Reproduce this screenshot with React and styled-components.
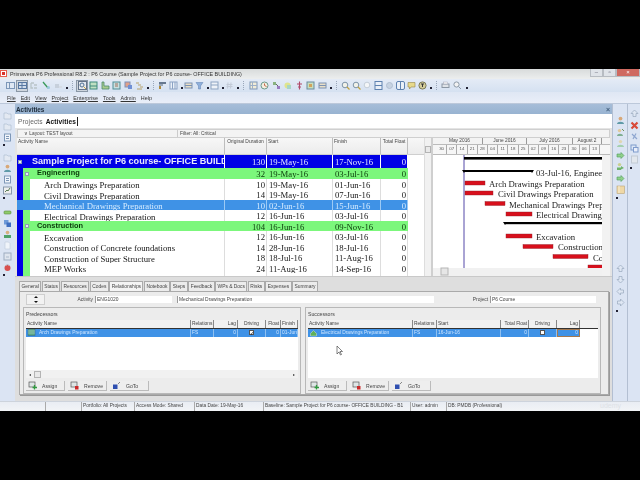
import React from 'react';
import styled, { createGlobalStyle } from 'styled-components';

const Global = createGlobalStyle`
  html, body { margin: 0; padding: 0; background: #000; }
  * { box-sizing: border-box; }
  body { font-family: "Liberation Sans", Arial, sans-serif; }
`;

const Page = styled.div`
  width: 640px; height: 480px; background: #000; padding-top: 69px; overflow: hidden; position: relative;
`;
const Win = styled.div`
  width: 640px; height: 342px; display: flex; flex-direction: column; background: #d9e3f2;
  filter: blur(0.3px); overflow: hidden;
`;
const TitleBar = styled.div`
  height: 10px; flex: none; display: flex; align-items: center; position: relative;
  background: linear-gradient(#d8dbdb, #eceeee); font-size: 5.4px; color: #333; padding-left: 10px; white-space: nowrap;
`;
const AppLogo = styled.span`
  position: absolute; left: 0; top: 1px; width: 7px; height: 7px; background: #d9332a; border: 1.5px solid #e8604f;
  box-shadow: inset 0 0 0 1px #fff;
`;
const WinBtns = styled.div`
  position: absolute; right: 0; top: 0; height: 8px; display: flex;
`;
const WinBtn = styled.span`
  width: ${p => p.$w}px; height: 8px; background: ${p => p.$bg}; border: 1px solid #b7bcc2; border-top: none;
  color: ${p => p.$fg}; font-size: 6px; line-height: 6px; text-align: center;
`;
const ToolRow = styled.div`
  height: 13px; flex: none; display: flex; align-items: center; padding-left: 5px;
  background: linear-gradient(#e4ebf6, #d5e1f1);
`;
const Tool = styled.span`
  display: flex; width: ${p => p.$w}px; height: 10px; margin-right: ${p => p.$mr}px; align-items: center; justify-content: center; flex: none;
  ${p => p.$on && 'background:#cfd6de; outline:1px solid #8a97a6;'}
`;
const Dot = styled.span`
  width: 2px; height: 2px; background: #223; margin: 5px 1px 0 1px; flex: none;
`;
const Sep = styled.span`
  width: 1px; height: 9px; border-left: 1px dotted #9aa7ba; margin: 0 4px 0 3px; flex: none;
`;
const MenuBar = styled.div`
  height: 12px; flex: none; display: flex; align-items: center; gap: 5px; padding-left: 7px;
  background: linear-gradient(#dfe7f4, #e9eef8); font-size: 5.4px; color: #333; border-bottom: 1px solid #bcc8da;
`;
const MenuKey = styled.span` text-decoration: underline; `;
const Body = styled.div` flex: 1; min-height: 0; display: flex; `;
const Dock = styled.div`
  flex: none; width: ${p => p.$w}px; display: flex; flex-direction: column; align-items: center; gap: ${p => p.$gap}px;
  padding-top: ${p => p.$top}px; background: #dbe4f3; border-left: ${p => p.$line ? '1px solid #b3bfd2' : 'none'};
`;
const DockDot = styled.span` width: 2px; height: 2px; background: #223; margin-right: 7px; flex: none; `;
const DockSpacer = styled.span` height: ${p => p.$h}px; flex: none; `;
const Main = styled.div` flex: none; width: 597px; display: flex; flex-direction: column; height: 297px; `;
const ViewTitle = styled.div`
  height: 10px; flex: none; background: linear-gradient(#a6bdd8, #98b3d1); display: flex; align-items: center; justify-content: space-between;
  padding: 0 2px 0 1px; font-size: 6.4px; font-weight: bold; color: #1d2b3a;
`;
const CloseX = styled.span` color: #44607e; font-size: 7px; font-weight: bold; `;
const ViewTabs = styled.div`
  height: 14px; flex: none; background: #fff; display: flex; align-items: center; padding-left: 3px; gap: 3px; font-size: 6.6px;
  color: #666; letter-spacing: 0.1px;
`;
const ViewTab = styled.span`
  font-weight: ${p => p.$on ? 'bold' : 'normal'}; color: ${p => p.$on ? '#111' : '#666'};
  ${p => p.$on && 'border-right:1px solid #222; padding-right:1px; line-height:9px;'}
`;
const Upper = styled.div`
  height: 148px; flex: none; background: #e4e4e4; padding: 1px 2px 0 2px; display: flex; flex-direction: column; overflow: hidden;
`;
const LayoutBar = styled.div`
  height: 9px; flex: none; display: flex; background: #f3f3f3; border: 1px solid #cfcfcf; font-size: 4.8px; color: #444; align-items: center;
`;
const LayoutCell = styled.span` width: ${p => p.$w}px; padding-left: ${p => p.$pl}px; flex: none; height: 100%; display: flex; align-items: center; border-right: ${p => p.$line ? '1px solid #ccc' : 'none'}; `;
const Split = styled.div` flex: 1; min-height: 0; display: flex; background: #fff; `;
const TablePane = styled.div` flex: none; width: 414px; display: flex; flex-direction: column; position: relative; overflow: hidden; `;
const Grid = `display:grid; grid-template-columns: 208px 42px 66px 48px 27px 17px;`;
const HeadRow = styled.div`
  ${Grid} height: 17px; flex: none; background: linear-gradient(#f7f7f7, #ececec); border-bottom: 1px solid #cfcfcf;
`;
const HeadCell = styled.div`
  font-size: 4.9px; color: #444; padding: 1px 1px; border-right: 1px solid #bdbdbd; text-align: ${p => p.$c ? 'center' : 'left'}; white-space: nowrap; overflow: hidden;
`;
const Row = styled.div`
  ${Grid} height: ${p => p.$h}px; flex: none; background: ${p => p.$bg}; color: ${p => p.$fg};
  font-family: "Liberation Serif", "Times New Roman", serif; font-size: 8.7px;
`;
const NameCell = styled.div`
  display: flex; height: 100%; align-items: center; position: relative; overflow: hidden; white-space: nowrap;
  border-right: 1px solid ${p => p.$line};
`;
const BlueGutter = styled.span` width: 6px; height: 100%; flex: none; background: ${p => p.$bg}; `;
const GreenGutter = styled.span` width: 7px; height: 100%; flex: none; background: ${p => p.$bg}; `;
const Expander = styled.span`
  position: absolute; left: ${p => p.$x}px; top: 50%; margin-top: -2px; width: 4px; height: 4px; background: #e8eef8; border: 1px solid #8c9cb5;
`;
const NameText = styled.span`
  padding-left: ${p => p.$pl}px; font-family: ${p => p.$bold ? '"Liberation Sans", Arial, sans-serif' : 'inherit'};
  font-weight: ${p => p.$bold ? 'bold' : 'normal'}; font-size: ${p => p.$size}px; position: relative; top: ${p => p.$bold ? -1 : 1}px;
`;
const ValCell = styled.div`
  height: 100%; display: flex; align-items: center; padding: 1px 1px 0 ${p => p.$r ? 1 : 2}px; justify-content: ${p => p.$r ? 'flex-end' : 'flex-start'};
  border-right: 1px solid ${p => p.$line}; white-space: nowrap;
`;
const Blank = styled.div` height: 100%; background: #fff; `;
const VScroll = styled.div`
  position: absolute; right: 0; top: 0; bottom: 0; width: 7px; background: #f1f1f1; border-left: 1px solid #ddd;
`;
const Thumb = styled.span`
  position: absolute; left: ${p => p.$l}px; top: ${p => p.$t}px; width: ${p => p.$w}px; height: ${p => p.$h}px; background: #e9e9e9; border: 1px solid #b4b4b4;
`;
const Divider = styled.div` width: 2px; flex: none; background: #cfcfcf; `;
const GanttPane = styled.div` flex: 1; min-width: 0; display: flex; flex-direction: column; position: relative; `;
const Months = styled.div` height: 7px; flex: none; display: flex; background: #f3f3f3; border-bottom: 1px solid #bbb; padding-left: 4px; `;
const Month = styled.span`
  width: ${p => p.$w}px; flex: none; font-size: 4.8px; line-height: 6px; text-align: center; color: #444; border-right: 1px solid #999; overflow: hidden; white-space: nowrap;
`;
const Weeks = styled.div` height: 10px; flex: none; display: flex; background: #f6f6f6; border-bottom: 1px solid #bbb; padding-left: 4px; `;
const Week = styled.span`
  width: 10.2px; flex: none; font-size: 4.4px; line-height: 8px; text-align: center; color: #555; border-right: 1px solid #aaa;
`;
const GanttSvg = styled.svg` display: block; flex: 1; min-height: 0; `;
const Lower = styled.div`
  flex: 1; min-height: 0; background: #dedede; padding: 4px 2px 0 4px; border-top: 1px solid #c9c9c9;
`;
const TabStrip = styled.div` height: 10px; display: flex; align-items: flex-end; `;
const DetailTab = styled.span`
  height: 10px; font-size: 4.9px; line-height: 9px; color: #444; padding: 0 1.4px; background: ${p => p.$on ? '#f4f4f4' : '#ececec'};
  border: 1px solid #aaa; border-bottom: none; margin-right: 0.6px; white-space: nowrap; flex: none;
`;
const DetailBody = styled.div`
  height: 104px; width: 590px; background: #ececec; border: 1px solid #aaa; padding: 2px 4px 0 3px; display: flex; flex-direction: column;
  box-shadow: 1px 1px 0 #999;
`;
const FieldRow = styled.div` height: 11px; flex: none; display: flex; align-items: center; font-size: 4.9px; color: #444; `;
const Spinner = styled.span`
  width: 19px; height: 11px; margin-left: 3px; flex: none; background: #f2f2f2; border: 1px solid #cfcfcf; position: relative;
  &::before { content: ""; position: absolute; left: 7px; top: 1px; border: 2px solid transparent; border-bottom: 2px solid #111; border-top: none; }
  &::after { content: ""; position: absolute; left: 7px; bottom: 1px; border: 2px solid transparent; border-top: 2px solid #111; border-bottom: none; }
`;
const FieldLabel = styled.span` width: ${p => p.$w}px; flex: none; text-align: right; padding-right: 2px; `;
const Field = styled.span`
  width: ${p => p.$w}px; height: 7px; flex: none; background: #fff; margin-right: ${p => p.$mr || 0}px; padding-left: 1px; line-height: 7px; border-left: 1px solid #999; overflow: hidden; white-space: nowrap;
`;
const Panels = styled.div` display: flex; gap: 4px; margin-top: 2px; flex: 1; min-height: 0; `;
const Panel = styled.div`
  width: ${p => p.$w}px; height: 87px; flex: none; border: 1px solid #b8b8b8; padding: 2px 2px 0 2px; display: flex; flex-direction: column; background: #ececec;
`;
const PanelTitle = styled.div` height: 10px; flex: none; font-size: 5.2px; color: #444; line-height: 8px; `;
const Table = styled.div` height: 58px; flex: none; background: #fff; display: flex; flex-direction: column; position: relative; `;
const THead = styled.div` height: 8.5px; flex: none; display: flex; background: #f1f1f1; border-bottom: 1px solid #333; `;
const TH = styled.span`
  width: ${p => p.$w}px; flex: none; font-size: 4.9px; line-height: 8px; color: #444; text-align: ${p => p.$a || 'left'}; padding: 0 1px; border-right: 1px solid #888; white-space: nowrap; overflow: hidden;
`;
const TRow = styled.div` height: 8.5px; flex: none; display: flex; background: #3f92e6; width: fit-content; `;
const TD = styled.span`
  width: ${p => p.$w}px; flex: none; font-size: 4.9px; line-height: 8px; color: #cfe6ff; padding: 0 1px; border-right: 1px solid #8fc0f0; white-space: nowrap; overflow: hidden;
  display: flex; align-items: center; justify-content: ${p => p.$a === 'center' ? 'center' : p.$a === 'right' ? 'flex-end' : 'flex-start'}; gap: 3px;
  ${p => p.$edit && 'outline:1px solid #a5794f; outline-offset:-1px;'}
`;
const Check = styled.span`
  width: 5px; height: 5px; background: #fff; border: 1px solid #555; font-size: 5px; line-height: 4px; color: #111; text-align: center; flex: none; display: block;
`;
const HBar = styled.div`
  position: absolute; left: 0; right: 0; bottom: 0; height: 8px; background: #f1f1f1; font-size: 4px; color: #333; display: flex; justify-content: space-between; padding: 2px 3px;
`;
const Buttons = styled.div` display: flex; margin-top: 3px; height: 10px; flex: none; `;
const Btn = styled.span`
  width: 39px; height: 10px; flex: none; display: flex; align-items: center; font-size: 5.1px; color: #444; background: #eee; border-right: 1px solid #bbb; border-bottom: 1px solid #bbb; margin-right: 3px; padding-left: 2px; gap: 5px;
`;
const Status = styled.div`
  height: 10px; flex: none; display: flex; align-items: center; background: linear-gradient(#e9edf3, #f2f4f7); font-size: 4.8px; color: #444; border-top: 1px solid #cdd3dc;
`;
const StatusCell = styled.span`
  width: ${p => p.$w}px; flex: none; height: 100%; line-height: 8px; padding-left: 1px; border-left: ${p => p.$line ? '1px solid #aaa' : 'none'}; white-space: nowrap; overflow: hidden;
`;
const Cursor = styled.svg` position: absolute; left: 336px; top: 346px; `;
const Watermark = styled.span`
  position: absolute; left: 600px; top: 402px; font-size: 7px; line-height: 8px; color: #dde1e6;
`;

const S = { width: 9, height: 9, viewBox: '0 0 9 9' };
const Glyph = ({ k }) => {
  const parts = {
    panes: <><rect x=".5" y="1.5" width="8" height="6" fill="#dfe8f4" stroke="#7d97b8" /><path d="M3.5 1.5v6" stroke="#7d97b8" /></>,
    panes2: <><rect x=".5" y="1.5" width="8" height="6" fill="#d0dcec" stroke="#5878a2" /><path d="M.5 4.5h8M4 1.5v6" stroke="#5878a2" /></>,
    net: <path d="M1 2h3M1 2v5h2M4 4h3M4 7h3" stroke="#b9c4c8" strokeWidth="1.3" fill="none" />,
    wand: <><path d="M1 1l5 6" stroke="#3a9a5a" strokeWidth="1.3" /><circle cx="6.5" cy="6.5" r="1.5" fill="#9cc9de" /></>,
    faint: <><rect x="1" y="3" width="4" height="4" fill="#c7d0dc" /><rect x="5" y="5" width="3" height="2" fill="#d6dde6" /></>,
    glass: <><rect x=".5" y=".5" width="8" height="8" fill="#e3e8ee" stroke="#64748a" /><circle cx="4" cy="4" r="2" fill="none" stroke="#4c6f95" /><path d="M5.5 5.5L8 8" stroke="#caa23e" /></>,
    bgreen: <><rect x="1" y="1" width="7" height="7" fill="#bfe0c2" stroke="#3f8a7c" /><path d="M1 5h7" stroke="#3f8a7c" /></>,
    bolive: <><path d="M1 1h2v4h5v3H1z" fill="#a8ca8e" stroke="#4b8a6d" strokeWidth=".8" /></>,
    bteal: <><rect x="1" y="1" width="7" height="7" fill="#c9dfe0" stroke="#4e8d96" /><path d="M3 3h3M3 5h3" stroke="#a0705c" /></>,
    bred: <><rect x="1" y="1" width="5" height="5" fill="#e0a08a" stroke="#7f90b8" /><rect x="4" y="4" width="4" height="4" fill="#6f8fd4" /></>,
    stairs: <path d="M1 2h3M3 4h3M5 6h3M2 8h5" stroke="#b7a26a" strokeWidth="1.1" fill="none" />,
    flag: <><rect x="1" y="1" width="7" height="2" fill="#66788f" /><rect x="1" y="3" width="4" height="2" fill="#98a7b9" /><rect x="1" y="5" width="2" height="3" fill="#b08a3a" /></>,
    cols: <><rect x="1" y="1" width="7" height="7" fill="#eaf0f8" stroke="#8ba2c4" /><path d="M3.5 1v7M6 1v7" stroke="#8ba2c4" /></>,
    tbl: <><rect x="1" y="2" width="7" height="5" fill="#e9dfc8" stroke="#7c92b2" /><path d="M1 4.5h7" stroke="#7c92b2" /></>,
    funnel: <path d="M1 1.5h7L5.5 5v3h-2V5z" fill="#8fb0dc" stroke="#5c7fb0" strokeWidth=".5" />,
    rows: <><rect x="1" y="1" width="7" height="7" fill="#eef2f8" stroke="#8da4c2" /><path d="M1 4h7" stroke="#8da4c2" /></>,
    hash: <path d="M3 1.5L2.5 7.5M6 1.5L5.5 7.5M1.5 3.5h6M1.5 5.5h6" stroke="#c3cbd8" />,
    cal: <><rect x="1" y="1" width="7" height="7" fill="#f1ecd8" stroke="#7f97b8" /><path d="M3.5 1v7M1 4.5h7" stroke="#9eb0c8" /></>,
    clock: <><circle cx="4.5" cy="4.5" r="3.5" fill="#f5efe0" stroke="#6d9a8a" /><path d="M4.5 2.5v2l2 1" stroke="#c2674d" fill="none" /></>,
    tree: <><rect x="1" y="1" width="3" height="3" fill="#88b27e" /><rect x="5" y="5" width="3" height="3" fill="#9a7ac0" /><path d="M4 3l2 2" stroke="#666" /></>,
    sun: <><circle cx="4.5" cy="4.5" r="3" fill="#dfe48e" /><rect x="4" y="4" width="4" height="4" fill="#a8d6c6" /></>,
    fork: <path d="M4.5 .5v8M2 3h5M3 6h3" stroke="#b04a6a" strokeWidth="1.1" />,
    pic: <><rect x="1" y="1" width="7" height="7" fill="#c7dfbf" stroke="#6a8ba0" /><rect x="3" y="3" width="3" height="3" fill="#d2a25a" /></>,
    zoomin: <><circle cx="4" cy="4" r="2.8" fill="#f1f1e8" stroke="#7d93a8" /><path d="M6 6l2.5 2.5" stroke="#c4a33c" strokeWidth="1.2" /></>,
    zoomf: <><circle cx="4" cy="4" r="2.8" fill="#f4f6f8" stroke="#c5ced9" /></>,
    hsplit: <><rect x="1" y=".5" width="7" height="8" fill="#eaf0f8" stroke="#5f82b0" /><path d="M1 4.5h7" stroke="#5f82b0" /></>,
    star: <circle cx="4.5" cy="4.5" r="3" fill="#c7d3e2" stroke="#b1bfd1" />,
    vsplit: <><rect x=".5" y=".5" width="8" height="8" rx="1.5" fill="#eaf0f8" stroke="#5f82b0" /><path d="M4.5 .5v8" stroke="#5f82b0" /></>,
    note: <path d="M1 1.5h7v4.5H4L2.5 8V6H1z" fill="#e7d98a" stroke="#95854a" strokeWidth=".6" />,
    badge: <><circle cx="4.5" cy="4.5" r="3.6" fill="#d3cd9a" stroke="#7b7a58" /><path d="M3 3h3M4.5 3v3" stroke="#333" /></>,
    print: <><rect x="1" y="3" width="7" height="3.5" fill="#dfe3e8" stroke="#8b96a3" /><rect x="2.5" y="1" width="4" height="2" fill="#f4f4f4" stroke="#aab" strokeWidth=".5" /></>,
    prev: <><circle cx="3.5" cy="3.5" r="2.6" fill="#f2f2f2" stroke="#8d9aa8" /><path d="M5.5 5.5l2.5 2.5" stroke="#8d9aa8" /></>,
    folder: <path d="M1 2h3l1 1h3v5H1z" fill="#e3e9f2" stroke="#a9b9cf" strokeWidth=".6" />,
    person: <><circle cx="4.5" cy="2.6" r="1.9" fill="#d8a878" /><path d="M1 8c0-3 7-3 7 0z" fill="#5f9aa8" /></>,
    sheet: <><rect x="1.5" y="1" width="6" height="7" fill="#f0f4fa" stroke="#7e97b7" /><path d="M3 3.5h3M3 5.5h3" stroke="#7e97b7" /></>,
    chart: <><rect x=".5" y="1" width="8" height="7" fill="#eee" stroke="#8898ac" /><path d="M2 6l2-2 1 1 2-3" stroke="#5a7c55" fill="none" /></>,
    pill: <rect x="1" y="3" width="7" height="3" rx="1" fill="#8ecb6a" stroke="#5b8a3c" strokeWidth=".6" />,
    stack: <><rect x="1" y="1" width="4.5" height="4.5" fill="#6e9ad8" /><rect x="3.5" y="3.5" width="4.5" height="4.5" fill="#3f6fc0" /></>,
    persong: <><circle cx="4.5" cy="2.6" r="1.8" fill="#d8b080" /><rect x="1" y="5" width="7" height="3" fill="#4fa36a" /></>,
    docf: <path d="M2 1h3.5L7 2.5V8H2z" fill="#f0f4fa" stroke="#c3cede" strokeWidth=".7" />,
    frame: <><rect x="1" y="1" width="7" height="7" fill="#dfe5ee" stroke="#9eacc0" /><rect x="3" y="4" width="3" height="2" fill="#c5cfdc" /></>,
    lock: <><circle cx="4.5" cy="5" r="3" fill="#d85050" /><path d="M3 3c0-2 3-2 3 0" stroke="#b8bcc4" fill="none" /></>,
    up: <path d="M4.5 1L8 4.5H6v3H3v-3H1z" fill="#dfe7f3" stroke="#9aa9bd" strokeWidth=".7" />,
    down: <path d="M4.5 8L1 4.5h2v-3h3v3h2z" fill="#dfe7f3" stroke="#9aa9bd" strokeWidth=".7" />,
    left: <path d="M1 4.5L4.5 1v2h3v3h-3v2z" fill="#dfe7f3" stroke="#9aa9bd" strokeWidth=".7" />,
    right: <path d="M8 4.5L4.5 1v2h-3v3h3v2z" fill="#dfe7f3" stroke="#9aa9bd" strokeWidth=".7" />,
    grn: <path d="M8 4.5L5 1.5v1.5H1v3h4v1.5z" fill="#8fd08a" stroke="#4f9a5a" strokeWidth=".6" />,
    pers2: <><circle cx="3.5" cy="2.6" r="1.7" fill="#e0c89a" /><path d="M1 8c0-3 6-3 6 0z" fill="#7fae92" /><path d="M6 1l2 2" stroke="#6b8f5a" /></>,
    pers3: <><circle cx="4.5" cy="2.6" r="1.7" fill="#e0d6b0" /><path d="M1 8c0-3 7-3 7 0z" fill="#a3cfae" /></>,
    pers4: <><circle cx="3.5" cy="2.6" r="1.7" fill="#c8d090" /><path d="M8 6L5 4v1.5H1V8h4v-.5z" fill="#6fb36c" /></>,
    pad: <><rect x="1" y="1" width="7.5" height="7.5" fill="#efd8a6" stroke="#b9a477" strokeWidth=".6" /><path d="M3 1v7" stroke="#f6eed6" /></>,
    xred: <path d="M1.5 1.5l6 6M7.5 1.5l-6 6" stroke="#d84a3a" strokeWidth="2.2" />,
    paint: <path d="M2 2l5 5M6 1.5L3 7" stroke="#8ea6d0" strokeWidth="1.2" />,
    copy: <><rect x="1" y="1" width="5" height="5" fill="#dce7f6" stroke="#7f9bcc" /><rect x="3.5" y="3.5" width="4.5" height="4.5" fill="#e8eefa" stroke="#7f9bcc" /></>,
    clip: <><rect x="1.5" y="1" width="6" height="7" fill="#e2e7ed" stroke="#c2cad4" /></>,
    addg: <><rect x="1" y="1" width="6" height="5" fill="#dfe6e6" stroke="#555" strokeWidth=".7" /><path d="M6.5 4v4.5M4.5 6.5h4.5" stroke="#2f9a3f" strokeWidth="1.3" /></>,
    delr: <><rect x="1" y="1" width="6" height="5" fill="#dfe6e6" stroke="#555" strokeWidth=".7" /><rect x="5" y="5" width="3.5" height="3.5" fill="#cc2a2a" /></>,
    goto: <><rect x="1" y="3.5" width="4.5" height="4.5" fill="#2f4fb0" /><path d="M6 3l2-2" stroke="#888" /></>,
    bar: <><rect x="1" y="1" width="7" height="6.5" fill="#5aa880" stroke="#3d6e88" strokeWidth=".6" /><path d="M1 3h7M1 5h7" stroke="#cde" strokeWidth=".5" /></>,
    greenUp: <path d="M1.5 8V5.5l3-3 3 3V8z" fill="#5fb05a" stroke="#eee" strokeWidth=".4" />,
  };
  return <svg {...S}>{parts[k]}</svg>;
};

const tools1 = [['panes'],['panes2',1],['net'],['wand'],['faint','d']];
const tools2 = [['glass',1],['bgreen'],['bolive'],['bteal'],['bred'],['stairs','d']];
const tools3 = [['flag'],['cols','d'],['tbl'],['funnel','d'],['rows','d'],['hash','d']];
const tools4 = [['cal'],['clock'],['tree'],['sun'],['fork'],['pic'],['tbl','d']];
const tools5 = [['zoomin'],['zoomin'],['zoomf'],['hsplit'],['star'],['vsplit'],['note'],['badge','d']];
const tools6 = [['print'],['prev','d']];
const Tools = ({ list, w, mr }) => list.map(([k, opt], i) => (
  <React.Fragment key={i}>
    <Tool $on={opt === 1} $w={w} $mr={mr}><Glyph k={k} /></Tool>
    {opt === 'd' && <Dot />}
  </React.Fragment>
));

const rows = [
  { n: 'Sample Project for P6 course- OFFICE BUILD', d: '130', s: '19-May-16', f: '17-Nov-16', t: 'p' },
  { n: 'Engineering', d: '32', s: '19-May-16', f: '03-Jul-16', t: 'g' },
  { n: 'Arch Drawings Preparation', d: '10', s: '19-May-16', f: '01-Jun-16' },
  { n: 'Civil Drawings Preparation', d: '14', s: '19-May-16', f: '07-Jun-16' },
  { n: 'Mechanical  Drawings Preparation', d: '10', s: '02-Jun-16', f: '15-Jun-16', t: 's' },
  { n: 'Electrical Drawings Preparation', d: '12', s: '16-Jun-16', f: '03-Jul-16' },
  { n: 'Construction', d: '104', s: '16-Jun-16', f: '09-Nov-16', t: 'g' },
  { n: 'Excavation', d: '12', s: '16-Jun-16', f: '03-Jul-16' },
  { n: 'Construction of Concrete foundations', d: '14', s: '28-Jun-16', f: '18-Jul-16' },
  { n: 'Construction of Super Structure', d: '18', s: '18-Jul-16', f: '11-Aug-16' },
  { n: 'MEP Works', d: '24', s: '11-Aug-16', f: '14-Sep-16' },
  { n: 'Finishes', d: '44', s: '14-Sep-16', f: '10-Nov-16' },
];
const look = {
  p: { bg: '#0000e6', fg: '#e8e8ff', line: '#fff', blue: '#0000e6', green: '#0000e6', h: 13 },
  g: { bg: '#7cf77c', fg: '#0a3a0a', line: '#7cf77c', blue: '#0000e6', green: '#7cf77c', h: 10.5 },
  s: { bg: '#3f92e6', fg: '#d5ebff', line: '#9ccaf5', blue: '#3f92e6', green: '#3f92e6', h: 10.5 },
  n: { bg: '#fff', fg: '#151515', line: '#ddd', blue: '#0000e6', green: '#7cf77c', h: 10.5 },
};

const months = [['May 2016', 46], ['June 2016', 44], ['July 2016', 46], ['August 2', 29]];
const weeks = ['30','07','14','21','28','04','11','18','25','02','09','16','23','30','06','13'];
const X0 = 433, Y0 = 155;
const bars = [
  [465, 485, 181, 'Arch Drawings Preparation', 489, 187],
  [465, 493, 191, 'Civil Drawings Preparation', 498, 197],
  [485, 505, 201.5, 'Mechanical  Drawings Preparation', 509, 207.5],
  [506, 532, 212, 'Electrical Drawings Preparation', 536, 217.5],
  [506, 532, 234, 'Excavation', 536, 240],
  [523, 553, 244.5, 'Construction of Concrete foundations', 558, 250],
  [553, 588, 254.5, 'Construction of Super Structure', 593, 260.5],
  [588, 625, 265, '', 0, 0],
];

const tabs = ['General','Status','Resources','Codes','Relationships','Notebook','Steps','Feedback','WPs & Docs','Risks','Expenses','Summary'];
const predCols = [[165,'Activity Name'],[23,'Relations'],[24,'Lag','right'],[28,'Driving','center'],[15,'Float','right'],[17,'Finish']];
const succCols = [[105,'Activity Name'],[24,'Relations'],[64,'Start'],[28,'Total Float','right'],[28,'Driving','center'],[23,'Lag','right']];

const dockL = [['folder'],['folder'],['sheet'],'.',3,['folder'],['person'],['sheet'],['chart'],'.',5,['pill'],['stack'],['persong'],['docf'],['frame'],['lock'],'.'];
const dockR1 = [['person'],['pers2'],['pers3'],['grn'],['pers4'],['grn'],['pad'],'.'];
const dockR2 = [['up'],['xred'],['paint'],['copy'],['clip'],'.'];
const DockItems = ({ list }) => list.map((d, i) => (
  d === '.' ? <DockDot key={i} /> : typeof d === 'number' ? <DockSpacer key={i} $h={d} /> : <Glyph key={i} k={d[0]} />
));

const ActionButtons = () => (
  <Buttons>
    <Btn><Glyph k="addg" />Assign</Btn>
    <Btn><Glyph k="delr" />Remove</Btn>
    <Btn><Glyph k="goto" />GoTo</Btn>
  </Buttons>
);

export default function App() {
  return (
    <Page>
      <Global />
      <Win>
        <TitleBar>
          <AppLogo />
          Primavera P6 Professional R8.2 : P6 Course (Sample Project for P6 course- OFFICE BUILDING)
          <WinBtns>
            <WinBtn $w={13} $bg="#dfe3e8" $fg="#667">–</WinBtn>
            <WinBtn $w={13} $bg="#dfe3e8" $fg="#667">▫</WinBtn>
            <WinBtn $w={24} $bg="#cf6a60" $fg="#fff">×</WinBtn>
          </WinBtns>
        </TitleBar>
        <ToolRow>
          <Tools list={tools1} w={10} mr={2} /><Sep />
          <Tools list={tools2} w={10} mr={1.5} /><Sep />
          <Tools list={tools3} w={9} mr={2} /><Sep />
          <Tools list={tools4} w={10} mr={1.5} /><Sep />
          <Tools list={tools5} w={9} mr={2} /><Sep />
          <Tools list={tools6} w={10} mr={2} />
        </ToolRow>
        <MenuBar>
          <MenuKey>File</MenuKey><MenuKey>Edit</MenuKey><MenuKey>View</MenuKey><MenuKey>Project</MenuKey>
          <MenuKey>Enterprise</MenuKey><MenuKey>Tools</MenuKey><MenuKey>Admin</MenuKey><span>Help</span>
        </MenuBar>
        <Body>
          <Dock $w={15} $gap={2} $top={7}><DockItems list={dockL} /></Dock>
          <Main>
            <ViewTitle>Activities<CloseX>×</CloseX></ViewTitle>
            <ViewTabs><span>Projects</span><ViewTab $on>Activities</ViewTab></ViewTabs>
            <Upper>
              <LayoutBar>
                <LayoutCell $w={160} $pl={6} $line>∨ Layout: TEST layout</LayoutCell>
                <LayoutCell $w={200} $pl={2}>Filter: All: Critical</LayoutCell>
              </LayoutBar>
              <Split>
                <TablePane>
                  <HeadRow>
                    <HeadCell>Activity Name</HeadCell>
                    <HeadCell $c>Original Duration</HeadCell>
                    <HeadCell>Start</HeadCell>
                    <HeadCell>Finish</HeadCell>
                    <HeadCell $c>Total Float</HeadCell>
                    <div />
                  </HeadRow>
                  {rows.map(r => {
                    const l = look[r.t || 'n'];
                    const bold = r.t === 'p' || r.t === 'g';
                    return (
                      <Row key={r.n} $h={l.h} $bg={l.bg} $fg={l.fg}>
                        <NameCell $line={l.line}>
                          <BlueGutter $bg={l.blue} />
                          <GreenGutter $bg={l.green} />
                          {bold && <Expander $x={r.t === 'p' ? 1 : 8} />}
                          <NameText $bold={bold} $size={r.t === 'p' ? 9.1 : bold ? 7.4 : 8.7} $pl={r.t === 'p' ? 2 : r.t === 'g' ? 7 : 14}>{r.n}</NameText>
                        </NameCell>
                        <ValCell $r $line={l.line}>{r.d}</ValCell>
                        <ValCell $line={l.line}>{r.s}</ValCell>
                        <ValCell $line={l.line}>{r.f}</ValCell>
                        <ValCell $r $line={l.line}>0</ValCell>
                        <Blank />
                      </Row>
                    );
                  })}
                  <VScroll><Thumb $l={0} $t={8} $w={6} $h={7} /></VScroll>
                </TablePane>
                <Divider />
                <GanttPane>
                  <Months>{months.map(([m, w]) => <Month key={m} $w={w}>{m}</Month>)}</Months>
                  <Weeks>{weeks.map((w, i) => <Week key={i}>{w}</Week>)}</Weeks>
                  <GanttSvg viewBox="0 0 177 121" width="177" height="121" preserveAspectRatio="xMinYMin slice">
                    <defs><clipPath id="gc"><rect x="0" y="0" width="169" height="113" /></clipPath></defs>
                    <rect x="169" width="8" height="121" fill="#f2f2f2" />
                    <rect y="113" width="169" height="8" fill="#f1f1f1" />
                    <rect x="8" y="113" width="7" height="7" fill="#e6e6e6" stroke="#b5b5b5" />
                    <g clipPath="url(#gc)">
                      <path d={`M${464 - X0} 0V121`} stroke="#5548a8" strokeWidth="1" />
                      <rect x={464 - X0} y={157 - Y0} width="140" height="2.6" fill="#000" />
                      <rect x={464 - X0} y={170 - Y0} width="69" height="2" fill="#000" />
                      <path d={`M${530 - X0} ${170 - Y0}h4l-2 3z`} fill="#000" />
                      <path d={`M${462 - X0} ${170 - Y0}h4l-2 3z`} fill="#000" />
                      <text x={536 - X0} y={176 - Y0} fontFamily="Liberation Serif" fontSize="8.7" fill="#222">03-Jul-16, Engineering</text>
                      <rect x={505 - X0} y={222 - Y0} width="100" height="2.2" fill="#000" />
                      <path d={`M${503 - X0} ${222 - Y0}h4l-2 3z`} fill="#000" />
                      {bars.map(([a, b, y, t, tx, ty], i) => (
                        <g key={i}>
                          <rect x={a - X0} y={y - Y0} width={b - a} height="4" fill="#d8101c" stroke="#8f2028" strokeWidth=".4" />
                          {t && <text x={tx - X0} y={ty - Y0} fontFamily="Liberation Serif" fontSize="8.7" fill="#222">{t}</text>}
                        </g>
                      ))}
                    </g>
                  </GanttSvg>
                </GanttPane>
              </Split>
            </Upper>
            <Lower>
              <TabStrip>
                {tabs.map(t => <DetailTab key={t} $on={t === 'Relationships'}>{t}</DetailTab>)}
              </TabStrip>
              <DetailBody>
                <FieldRow>
                  <Spinner />
                  <FieldLabel $w={50}>Activity</FieldLabel>
                  <Field $w={77} $mr={5}>ENG1020</Field>
                  <Field $w={257}>Mechanical  Drawings Preparation</Field>
                  <FieldLabel $w={56}>Project</FieldLabel>
                  <Field $w={106}>P6 Course</Field>
                </FieldRow>
                <Panels>
                  <Panel $w={278}>
                    <PanelTitle>Predecessors</PanelTitle>
                    <Table>
                      <THead>{predCols.map(([w, t, a]) => <TH key={t} $w={w} $a={a}>{t}</TH>)}</THead>
                      <TRow>
                        <TD $w={165}><Glyph k="bar" />Arch Drawings Preparation</TD>
                        <TD $w={23}>FS</TD>
                        <TD $w={24} $a="right">0</TD>
                        <TD $w={28} $a="center"><Check>✓</Check></TD>
                        <TD $w={15} $a="right">0</TD>
                        <TD $w={17}>01-Jun</TD>
                      </TRow>
                      <HBar><span>◂</span><span>▸</span><Thumb $l={8} $t={1} $w={7} $h={7} /></HBar>
                    </Table>
                    <ActionButtons />
                  </Panel>
                  <Panel $w={296}>
                    <PanelTitle>Successors</PanelTitle>
                    <Table>
                      <THead>{succCols.map(([w, t, a]) => <TH key={t} $w={w} $a={a}>{t}</TH>)}</THead>
                      <TRow>
                        <TD $w={105}><Glyph k="greenUp" />Electrical Drawings Preparation</TD>
                        <TD $w={24}>FS</TD>
                        <TD $w={64}>16-Jun-16</TD>
                        <TD $w={28} $a="right">0</TD>
                        <TD $w={28} $a="center"><Check /></TD>
                        <TD $w={23} $a="right" $edit>0</TD>
                      </TRow>
                    </Table>
                    <ActionButtons />
                  </Panel>
                </Panels>
              </DetailBody>
            </Lower>
          </Main>
          <Dock $w={15} $line $gap={2.5} $top={12}>
            <DockItems list={dockR1} />
            <DockSpacer $h={60} />
            <Glyph k="up" /><Glyph k="down" /><Glyph k="left" /><Glyph k="right" />
            <DockDot />
          </Dock>
          <Dock $w={13} $line $gap={2.6} $top={5}><DockItems list={dockR2} /></Dock>
        </Body>
        <Status>
          <StatusCell $w={45} />
          <StatusCell $w={36} $line />
          <StatusCell $w={53} $line>Portfolio: All Projects</StatusCell>
          <StatusCell $w={60} $line>Access Mode: Shared</StatusCell>
          <StatusCell $w={69} $line>Data Date: 19-May-16</StatusCell>
          <StatusCell $w={147} $line>Baseline: Sample Project for P6 course- OFFICE BUILDING - B1</StatusCell>
          <StatusCell $w={36} $line>User: admin</StatusCell>
          <StatusCell $w={80} $line>DB: PMDB (Professional)</StatusCell>
        </Status>
      </Win>
      <Cursor width="7" height="10" viewBox="0 0 7 10"><path d="M1 0v8l2-2 1.5 3 1-.5L4 5.5h2.5z" fill="#fff" stroke="#333" strokeWidth=".6" /></Cursor>
      <Watermark>udemy</Watermark>
    </Page>
  );
}
